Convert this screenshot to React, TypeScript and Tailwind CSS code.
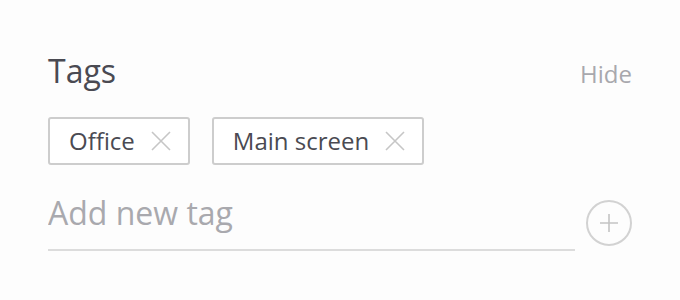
const tags = ["Office", "Main screen"];

function CloseIcon() {
    return (
        <svg
            width="20"
            height="20"
            viewBox="0 0 20 20"
            className="shrink-0 text-[#c6c6c6]"
        >
            <path
                d="M1 1L19 19M19 1L1 19"
                stroke="currentColor"
                strokeWidth="1.6"
                fill="none"
            />
        </svg>
    );
}

export default function App() {
    return (
        <div
            className="h-[300px] w-[680px] bg-[#fdfdfd] px-12 pt-[49px]"
            style={{ fontFamily: '"Open Sans", sans-serif' }}
        >
            <div className="flex items-baseline justify-between">
                <h2 className="text-[32px] leading-[44px] text-[#4a4a52]">
                    Tags
                </h2>
                <button className="text-[24px] leading-[36px] text-[#a8a8ad]">
                    Hide
                </button>
            </div>
            <div className="mt-[24px] flex gap-[22px]">
                {tags.map((tag) => (
                    <div
                        key={tag}
                        className="flex h-[48px] items-center gap-[16px] rounded-[3px] border-2 border-[#cdcdcd] bg-white pl-[19px] pr-[17px]"
                    >
                        <span className="text-[24px] leading-[32px] text-[#4a4a52]">
                            {tag}
                        </span>
                        <CloseIcon />
                    </div>
                ))}
            </div>
            <div className="mt-[26px] flex items-end gap-[11px]">
                <div className="flex-1 border-b-2 border-[#dcdcdc] pb-[14px]">
                    <input
                        className="block h-[44px] w-full bg-transparent text-[32px] leading-[44px] text-[#4a4a52] outline-none placeholder:text-[#a9a9ae]"
                        placeholder="Add new tag"
                    />
                </div>
                <button className="mb-[5px] flex h-[46px] w-[46px] items-center justify-center rounded-full border-2 border-[#d2d2d2]">
                    <svg width="20" height="20" viewBox="0 0 20 20">
                        <path
                            d="M10 1V19M1 10H19"
                            stroke="#c4c4c4"
                            strokeWidth="1.6"
                            fill="none"
                        />
                    </svg>
                </button>
            </div>
        </div>
    );
}
